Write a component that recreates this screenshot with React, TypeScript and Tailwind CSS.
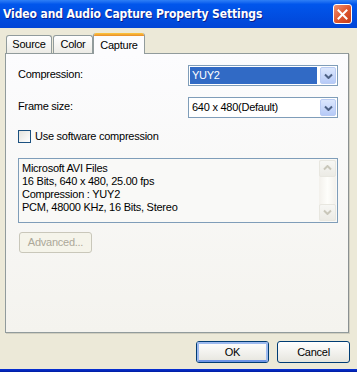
import type { ReactNode } from "react";

const font = "font-['Liberation_Sans',Arial,sans-serif]";

function Chevron({ color, dir = "down" }: { color: string; dir?: "down" | "up" }) {
  return (
    <svg width="9" height="6" viewBox="0 0 9 6" className={dir === "up" ? "rotate-180" : ""}>
      <path d="M1 1.5 L4.5 5 L8 1.5" fill="none" stroke={color} strokeWidth="2" />
    </svg>
  );
}

function Combo({ value, selected }: { value: string; selected?: boolean }) {
  return (
    <div className="flex h-[21px] w-[150px] border border-[#7F9DB9] bg-white p-px">
      <div className="flex flex-1 items-center pr-[3px]">
        <span
          className={
            selected
              ? "flex h-full w-full items-center bg-[#316AC5] pl-[2px] text-white"
              : "flex h-full w-full items-center pl-[2px] text-black"
          }
        >
          {value}
        </span>
      </div>
      <div className="flex w-[16px] items-center justify-center rounded-[2px] border border-[#B9CBF3] bg-gradient-to-b from-[#DCE7FD] to-[#B6CAF7]">
        <Chevron color="#4D6185" />
      </div>
    </div>
  );
}

function Tab({ label, active, w }: { label: string; active?: boolean; w: string }) {
  if (active) {
    return (
      <div
        className={`relative z-10 flex h-[21px] ${w} flex-col overflow-hidden rounded-t-[3px] border-x border-[#919B9C] bg-[#FCFCFE]`}
      >
        <div className="h-[3px] bg-gradient-to-b from-[#FFC83C] to-[#E68B2C]" />
        <div className="flex flex-1 items-start justify-center pt-[1px]">{label}</div>
      </div>
    );
  }
  return (
    <div
      className={`mt-[2px] flex h-[18px] ${w} items-center justify-center rounded-t-[3px] border border-b-0 border-[#919B9C] bg-gradient-to-b from-white to-[#ECEBE6]`}
    >
      {label}
    </div>
  );
}

function XpButton({ children, def }: { children: ReactNode; def?: boolean }) {
  return (
    <div className="h-[22px] w-[73px] rounded-[3px] border border-[#003C74] bg-gradient-to-b from-white to-[#E6E5DE]">
      <div
        className={
          def
            ? "flex h-full w-full items-center justify-center rounded-[2px] border-2 border-[#9DBAEF] border-b-[#6D94E6]"
            : "flex h-full w-full items-center justify-center"
        }
      >
        {children}
      </div>
    </div>
  );
}

function ScrollBtn({ dir }: { dir: "up" | "down" }) {
  return (
    <div className="flex h-[17px] items-center justify-center rounded-[2px] border border-[#E8E7E0] bg-gradient-to-b from-[#F7F7F4] to-[#ECEBE5]">
      <Chevron color="#C9C7BA" dir={dir} />
    </div>
  );
}

export default function App() {
  return (
    <div
      className={`${font} flex h-[372px] w-[357px] flex-col overflow-hidden bg-[#ECE9D8] text-[11px] tracking-[-0.25px] text-black`}
    >
      {/* title bar */}
      <div className="flex h-[28px] items-center justify-between bg-gradient-to-b from-[#2E7FF6] via-[#0156EC] via-15% to-[#0145D6] pl-[3px] pr-[5px]">
        <span className="font-['DejaVu_Sans_Condensed','DejaVu_Sans',sans-serif] text-[12px] font-bold tracking-[-0.1px] text-white [text-shadow:1px_1px_0_#0A1E8C]">
          Video and Audio Capture Property Settings
        </span>
        <div className="flex h-[20px] w-[19px] items-center justify-center rounded-[3px] border border-white bg-gradient-to-br from-[#EE9072] via-[#E0572F] to-[#C33C1A]">
          <svg width="11" height="11" viewBox="0 0 11 11">
            <path d="M1.5 1.5 L9.5 9.5 M9.5 1.5 L1.5 9.5" stroke="white" strokeWidth="2" strokeLinecap="square" />
          </svg>
        </div>
      </div>

      {/* tabs */}
      <div className="mt-[5px] flex pl-[6px]">
        <Tab label="Source" w="w-[46px]" />
        <div className="w-[1px]" />
        <Tab label="Color" w="w-[40px]" />
        <Tab label="Capture" w="w-[52px]" active />
      </div>

      {/* page */}
      <div className="mx-[5px] -mt-px mr-[8px] flex h-[280px] flex-col border border-[#919B9C] border-r-[#8A9091] bg-gradient-to-b from-[#FCFCFE] to-[#F4F3EE] pl-[12px] pr-[10px] shadow-[1px_1px_0_#D0CEBF]">
        <div className="mt-[11px] flex justify-between">
          <span className="mt-[1px]">Compression:</span>
          <Combo value="YUY2" selected />
        </div>
        <div className="mt-[11px] flex justify-between">
          <span className="mt-[1px]">Frame size:</span>
          <Combo value="640 x 480(Default)" />
        </div>
        <div className="mt-[10px] flex items-center gap-[4px]">
          <div className="h-[13px] w-[13px] border border-[#1C5180] bg-gradient-to-br from-[#E4E3DD] to-white" />
          <span>Use software compression</span>
        </div>
        <div className="mt-[13px] flex h-[65px] border border-[#7F9DB9] bg-[#F9F9F7] p-px">
          <div className="flex-1 pl-[2px] pt-[2px] leading-[13px]">
            <div>Microsoft AVI Files</div>
            <div>16 Bits, 640 x 480, 25.00 fps</div>
            <div>Compression : YUY2</div>
            <div>PCM, 48000 KHz, 16 Bits, Stereo</div>
          </div>
          <div className="flex w-[17px] flex-col bg-gradient-to-r from-[#F3F1EC] via-[#FEFEFB] to-[#F3F1EC]">
            <ScrollBtn dir="up" />
            <div className="flex-1" />
            <ScrollBtn dir="down" />
          </div>
        </div>
        <div className="ml-px mt-[9px] flex h-[21px] w-[73px] items-center justify-center rounded-[3px] border border-[#C9C7BA] bg-[#F5F4EA] text-[#ACA899]">
          Advanced...
        </div>
      </div>

      {/* footer */}
      <div className="mt-[8px] flex justify-end gap-[8px] pr-[7px]">
        <XpButton def>OK</XpButton>
        <XpButton>Cancel</XpButton>
      </div>
      <div className="flex-1" />
      <div className="h-[3px] bg-gradient-to-b from-[#0831D9] to-[#001DA0]" />
    </div>
  );
}
